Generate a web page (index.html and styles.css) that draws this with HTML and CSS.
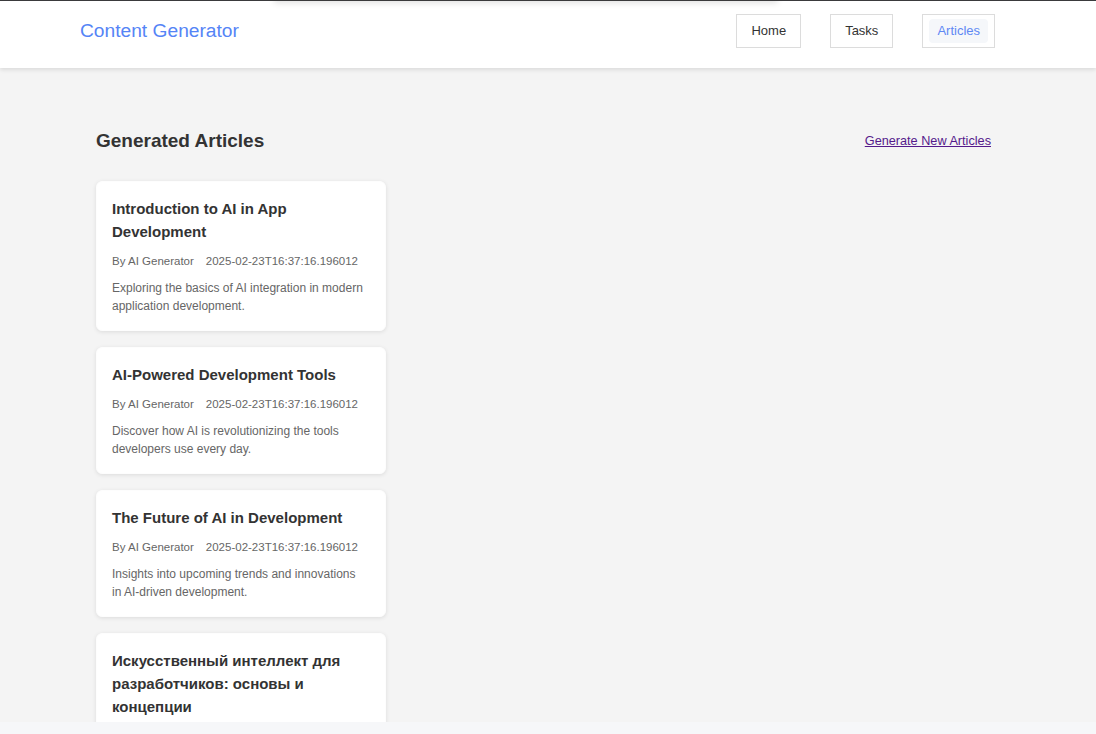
FILE: index.html
```html
<!DOCTYPE html>
<html lang="en">
<head>
<meta charset="utf-8">
<title>Content Generator</title>
<link rel="stylesheet" href="styles.css">
</head>
<body>
<div class="app">
  <div class="topline"></div>
  <div class="popup-edge"></div>
  <header class="site-header">
    <a class="logo" href="#">Content Generator</a>
    <nav class="nav">
      <div class="nav-item"><a class="nav-link" href="#">Home</a></div>
      <div class="nav-item"><a class="nav-link" href="#">Tasks</a></div>
      <div class="nav-item"><a class="nav-link active" href="#">Articles</a></div>
    </nav>
  </header>
  <main class="main">
    <div class="page-head">
      <h2 class="page-title">Generated Articles</h2>
      <a class="gen-link" href="#">Generate New Articles</a>
    </div>
    <div class="list">
      <article class="card">
        <h3 class="card-title">Introduction to AI in App Development</h3>
        <div class="meta"><span>By AI Generator</span><span>2025-02-23T16:37:16.196012</span></div>
        <p class="desc">Exploring the basics of AI integration in modern application development.</p>
      </article>
      <article class="card">
        <h3 class="card-title">AI-Powered Development Tools</h3>
        <div class="meta"><span>By AI Generator</span><span>2025-02-23T16:37:16.196012</span></div>
        <p class="desc">Discover how AI is revolutionizing the tools developers use every day.</p>
      </article>
      <article class="card">
        <h3 class="card-title">The Future of AI in Development</h3>
        <div class="meta"><span>By AI Generator</span><span>2025-02-23T16:37:16.196012</span></div>
        <p class="desc">Insights into upcoming trends and innovations in AI-driven development.</p>
      </article>
      <article class="card">
        <h3 class="card-title">Искусственный интеллект для разработчиков: основы и концепции</h3>
        <div class="meta"><span>By AI Generator</span><span>2025-02-23T16:37:16.196012</span></div>
        <p class="desc">Основные понятия и концепции искусственного интеллекта для разработчиков.</p>
      </article>
    </div>
  </main>
</div>
</body>
</html>
```

FILE: styles.css
```css
* { box-sizing: border-box; }

html, body {
  margin: 0;
  padding: 0;
  background: #f6f7f9;
  font-family: "Liberation Sans", Arial, sans-serif;
  color: #333;
}

.app {
  position: relative;
  height: 722px;
  overflow: hidden;
  background: #f4f4f4;
}

.topline {
  position: absolute;
  top: 0;
  left: 0;
  right: 0;
  height: 1px;
  background: #3a3a3c;
  z-index: 5;
}

.popup-edge {
  position: absolute;
  top: -12px;
  left: 274px;
  width: 504px;
  height: 13px;
  background: #fff;
  box-shadow: 0 2px 6px rgba(0, 0, 0, 0.12);
  z-index: 4;
}

.site-header {
  height: 68px;
  background: #fff;
  display: flex;
  align-items: center;
  justify-content: space-between;
  padding: 0 101px 6px 80px;
  box-shadow: 0 2px 4px rgba(0, 0, 0, 0.1);
  position: relative;
  z-index: 2;
}

.logo {
  font-size: 19.2px;
  line-height: 22px;
  color: #5584f6;
  text-decoration: none;
}

.nav {
  display: flex;
  gap: 29px;
}

.nav-item {
  border: 1px solid #dcdcdc;
  padding: 4px 6px;
}

.nav-link {
  display: block;
  padding: 4px 8px;
  font-size: 13px;
  line-height: 16px;
  color: #333;
  text-decoration: none;
  border-radius: 4px;
}

.nav-link.active {
  color: #6088f4;
  background: #f5f7fa;
}

.main {
  padding: 61px 105px 0 96px;
}

.page-head {
  display: flex;
  align-items: center;
  justify-content: space-between;
  margin-bottom: 29px;
}

.page-title {
  margin: 0;
  font-size: 19px;
  line-height: 23px;
  font-weight: bold;
  color: #333;
}

.gen-link {
  font-size: 12.7px;
  color: #551a8b;
  text-decoration: underline;
}

.list {
  display: flex;
  flex-direction: column;
  gap: 16px;
  width: 290px;
}

.card {
  background: #fff;
  border-radius: 6px;
  border: 1px solid #fdfdfd;
  padding: 15px 18px 15px 15px;
  box-shadow: 0 1px 4px rgba(0, 0, 0, 0.1);
}

.card-title {
  margin: 0 0 10px;
  font-size: 15px;
  line-height: 23px;
  font-weight: bold;
  color: #333;
}

.meta {
  display: flex;
  gap: 12px;
  font-size: 11.5px;
  line-height: 17px;
  color: #666;
  margin-bottom: 9px;
  white-space: nowrap;
}

.desc {
  margin: 0;
  font-size: 12px;
  line-height: 18px;
  color: #666;
}
```
